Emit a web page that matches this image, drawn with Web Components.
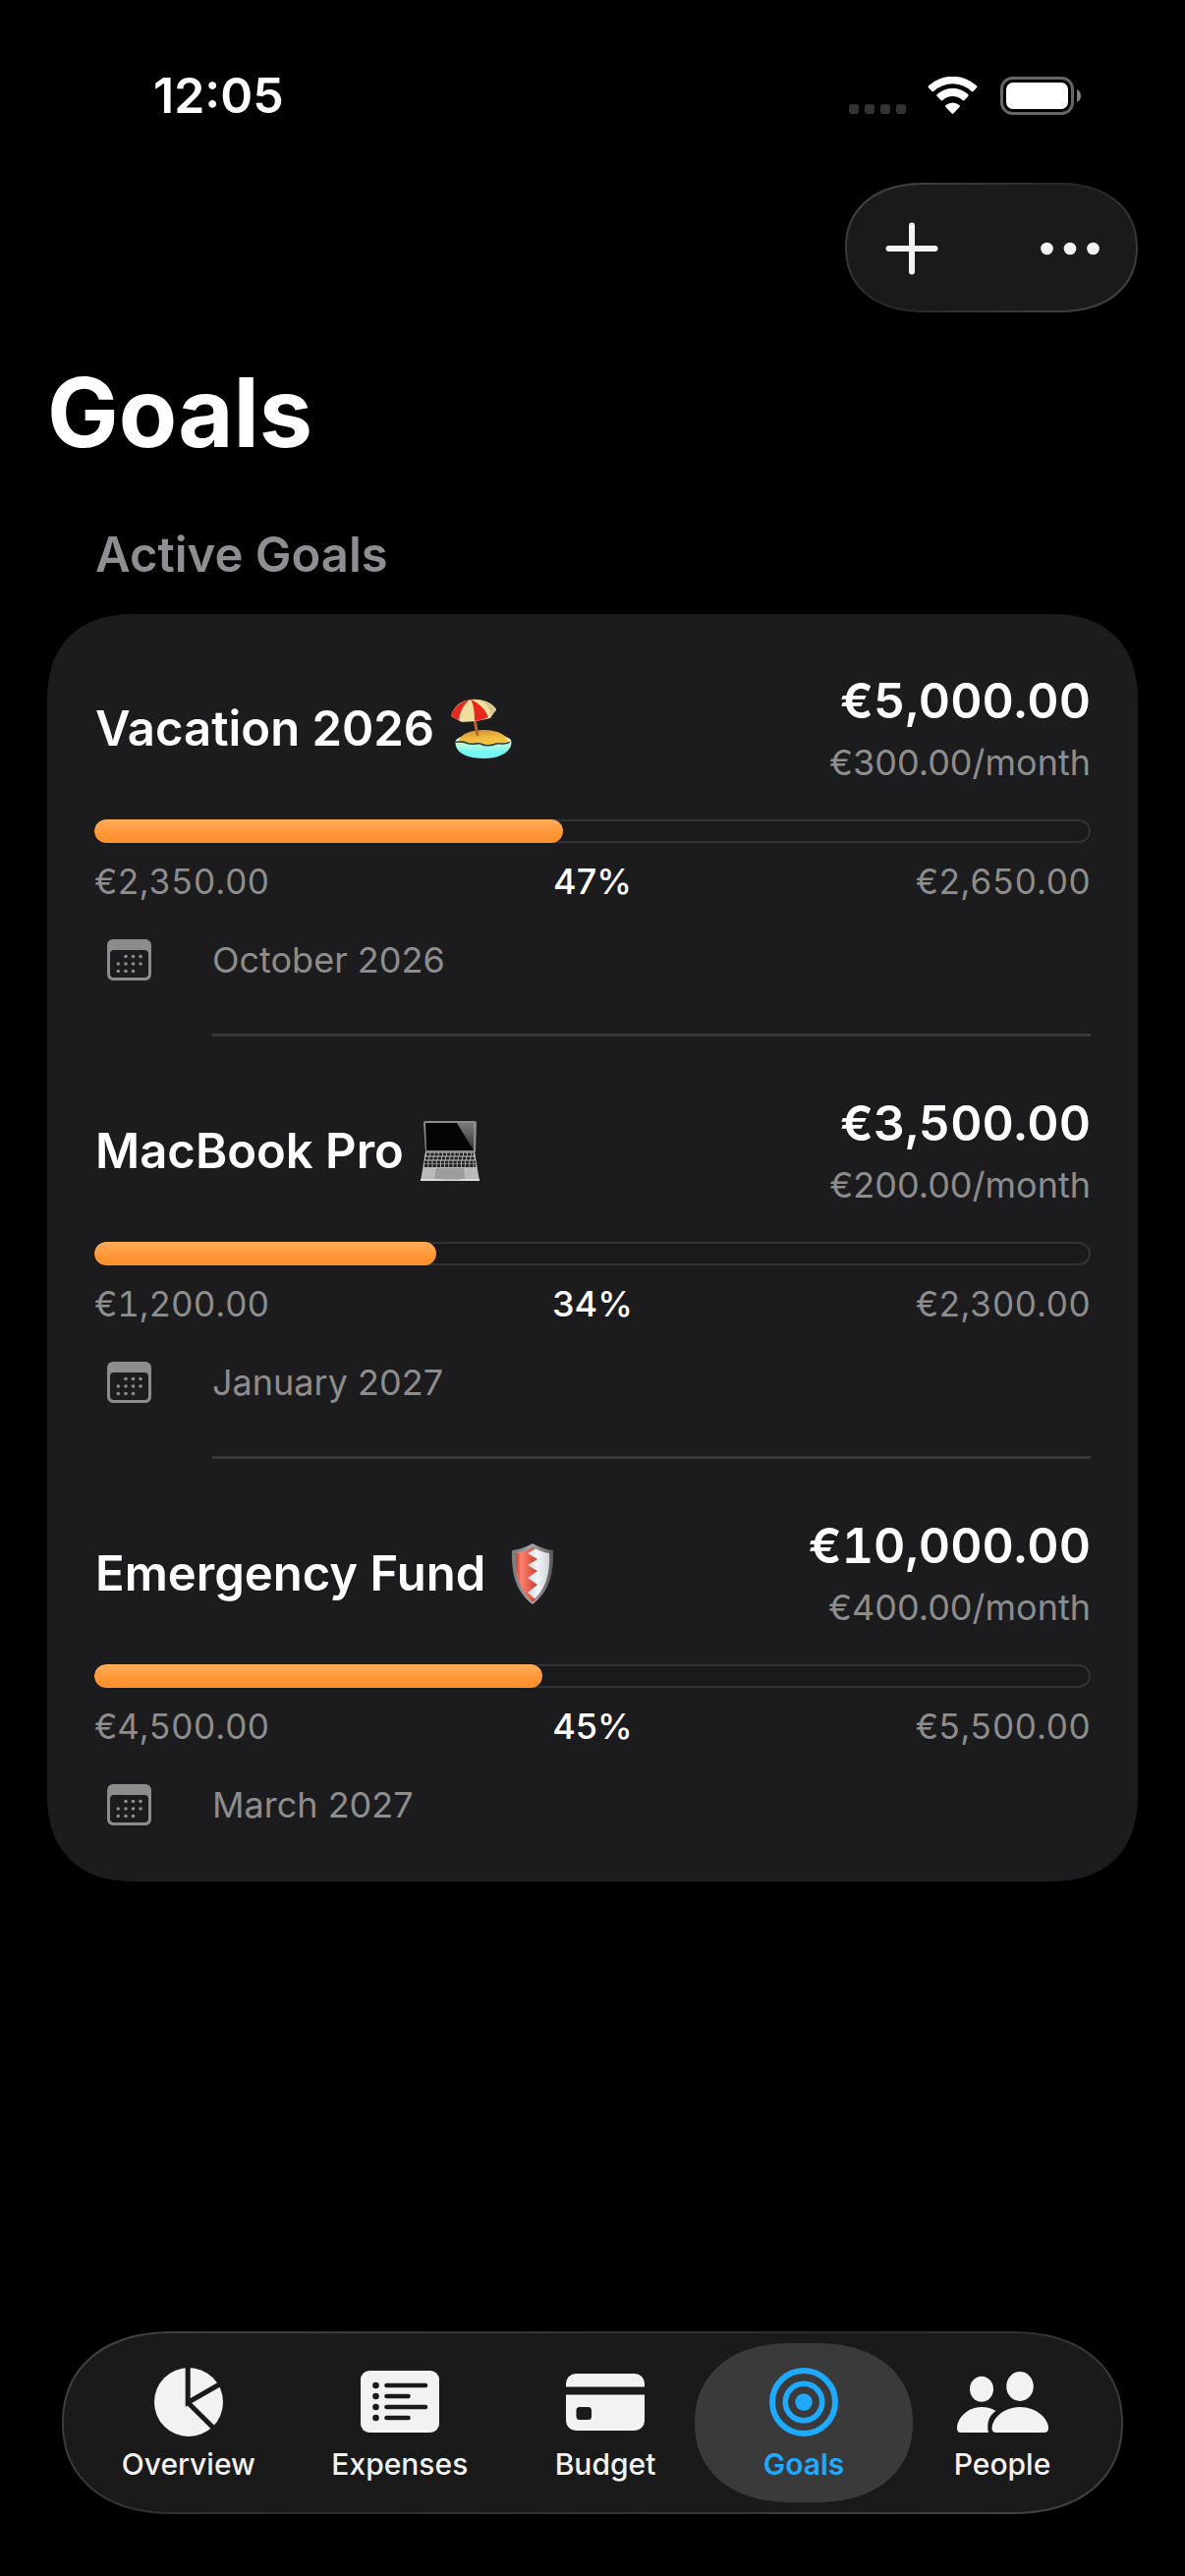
<!DOCTYPE html>
<html lang="en">
<head>
<meta charset="utf-8">
<meta name="viewport" content="width=device-width, initial-scale=1">
<title>Goals</title>
<style>
  body {
    margin: 0;
    background: #000;
    color: #fff;
    font-family: Inter, "Liberation Sans", sans-serif;
    font-size: 36px;
    line-height: 42px;
  }
</style>
</head>
<body>
<goals-app></goals-app>

<script>
/**
 * Attaches an open shadow root with the given markup.
 *
 * @param {HTMLElement} element - The host.
 * @param {string} html - Markup and styles.
 * @returns {ShadowRoot} The shadow root.
 */
function render (element, html) {
  const template = document.createElement('template')
  template.innerHTML = html
  const root = element.attachShadow({ mode: 'open' })
  root.appendChild(template.content.cloneNode(true))
  return root
}

const icons = {
  signal: [58, 38, `<g fill="#333"><rect y="28" width="10" height="10" rx="3"/><rect x="16" y="28" width="10" height="10" rx="3"/><rect x="32" y="28" width="10" height="10" rx="3"/><rect x="48" y="28" width="10" height="10" rx="3"/></g>`],
  wifi: [52, 38, `<g fill="currentColor"><path d="M1 11.200Q0 10.200 1 9.200A36.500 36.500 0 0 1 50 9.200Q51 10.200 50 11.200L46.400 14.900Q45.500 15.700 44.500 14.800A28 28 0 0 0 6.500 14.800Q5.500 15.700 4.600 14.900Z"/><path d="M9.700 20Q8.700 19 9.700 18A23.400 23.400 0 0 1 41.300 18Q42.300 19 41.300 20L37.400 24Q36.500 24.900 35.500 24A14.800 14.800 0 0 0 15.500 24Q14.500 24.900 13.600 24Z"/><path d="M18.500 29Q17.600 28 18.600 27.100A10.500 10.500 0 0 1 32.400 27.100Q33.400 28 32.500 29L26.300 35.500Q25.500 36.300 24.700 35.500Z" transform="translate(0 2)"/></g>`],
  battery: [82, 39, `<rect x="1.500" y="1.500" width="72" height="36" rx="11" fill="none" stroke="#666" stroke-width="3"/><rect x="6" y="6" width="63" height="27" rx="7" fill="currentColor"/><path d="M78 13q4 2 4 6.500t-4 6.500z" fill="#808080"/>`],
  plus: [54, 54, `<path d="M27 3.500v47M3.500 27h47" stroke="currentColor" stroke-width="6" stroke-linecap="round"/>`],
  more: [60, 14, `<g fill="currentColor"><circle cx="6.500" cy="7" r="6.300"/><circle cx="30" cy="7" r="6.300"/><circle cx="53.500" cy="7" r="6.300"/></g>`],
  calendar: [46, 42, `<path fill="currentColor" fill-rule="evenodd" d="M6 0h33a6 6 0 0 1 6 6v30a6 6 0 0 1-6 6H6a6 6 0 0 1-6-6V6a6 6 0 0 1 6-6zM7 11a4 4 0 0 0-4 4v20a4 4 0 0 0 4 4h31a4 4 0 0 0 4-4V15a4 4 0 0 0-4-4z"/><g fill="currentColor"><circle cx="19" cy="17.500" r="1.800"/><circle cx="26.500" cy="17.500" r="1.800"/><circle cx="34" cy="17.500" r="1.800"/><circle cx="11.300" cy="25" r="1.800"/><circle cx="19" cy="25" r="1.800"/><circle cx="26.500" cy="25" r="1.800"/><circle cx="34" cy="25" r="1.800"/><circle cx="11.300" cy="32.500" r="1.800"/><circle cx="19" cy="32.500" r="1.800"/><circle cx="26.500" cy="32.500" r="1.800"/></g>`],
  overview: [94, 72, `<mask id="m"><path fill="#fff" d="M0 0h94v72H0z"/><path d="M46.200-2v38.500L80 17M46.200 36.500 74 64" fill="none" stroke="#000" stroke-width="5"/></mask><circle cx="47" cy="36" r="35" fill="currentColor" mask="url(#m)"/>`],
  expenses: [94, 72, `<path fill="currentColor" d="M16 4h62a9 9 0 0 1 9 9v45a9 9 0 0 1-9 9H16a9 9 0 0 1-9-9V13a9 9 0 0 1 9-9z"/><g fill="#1a1a1a"><circle cx="22.500" cy="19" r="3.300"/><circle cx="22.500" cy="30" r="3.300"/><circle cx="22.500" cy="41" r="3.300"/><circle cx="22.500" cy="52" r="3.300"/></g><path d="M33.500 19h39.500M33.500 30h22M33.500 41h39.500M33.500 52h22" stroke="#1a1a1a" stroke-width="4.600" stroke-linecap="round"/>`],
  budget: [94, 72, `<path fill="currentColor" fill-rule="evenodd" d="M7 20.500V17A10 10 0 0 1 17 7h60a10 10 0 0 1 10 10v3.500zM7 28.500h80V55a10 10 0 0 1-10 10H17A10 10 0 0 1 7 55zM21 41a3.500 3.500 0 0 0-3.500 3.500v6A3.500 3.500 0 0 0 21 54h8.500a3.500 3.500 0 0 0 3.500-3.500v-6A3.500 3.500 0 0 0 29.500 41z"/>`],
  goals: [94, 72, `<g fill="none" stroke="currentColor"><circle cx="47" cy="36" r="32" stroke-width="6"/><circle cx="47" cy="36" r="18.700" stroke-width="5.600"/></g><circle cx="47" cy="36" r="8.700" fill="currentColor"/>`],
  people: [94, 72, `<g fill="currentColor"><ellipse cx="26" cy="22.700" rx="12" ry="13"/><ellipse cx="65" cy="20" rx="13.800" ry="15"/><path d="M5 67q-4 0-4-4.500C1 53 11 41 26 41q8.500 0 14.500 4C33 50 31 58 33 67z"/><path d="M41 67q-4.500 0-4.500-4.500C36.500 53 48 41 65 41s29 12 29 21.500Q94 67 89.500 67z"/></g>`]
}

customElements.define('app-icon',
/**
 * Draws one of the named icons.
 */
  class extends HTMLElement {
    connectedCallback () {
      const [width, height, shape] = icons[this.getAttribute('name')]
      render(this, `
        <style>
          :host { display: block; flex: none; }
          svg { display: block; }
        </style>
        <svg width="${width}" height="${height}" viewBox="0 0 ${width} ${height}" aria-hidden="true">${shape}</svg>
      `)
    }
  })

const pictures = {
  beach: ['Beach with umbrella', `
    <defs>
      <linearGradient id="sea" x2="0" y2="1"><stop offset=".3" stop-color="#e9f3cf"/><stop offset=".75" stop-color="#6cf8f4"/><stop offset="1" stop-color="#8ee"/></linearGradient>
      <linearGradient id="sand" x2=".3" y2="1"><stop stop-color="#c98a36"/><stop offset=".6" stop-color="#f2b93e"/><stop offset="1" stop-color="#f8c93f"/></linearGradient>
    </defs>
    <path d="M5 42C2 54 15 61 33 61s31-8 28-19c-8-9-46-9-56 0z" fill="url(#sea)"/>
    <path d="M8 45C8 36 20 32 34 32s25 6 24 13c-4 3-8-1-13 1-6 3-11 1-15 0-7-2-9 2-14-1-3-2-6 0-8 0z" fill="url(#sand)"/>
    <path d="M5 44c4 1 7-1 10 1 6 3 9 0 15 1 6 3 11 2 16 0 5-1 9 2 14-2" fill="none" stroke="#24403f" stroke-width="1.600"/>
    <path d="M23 17l4 20" stroke="#b96430" stroke-width="2.800" stroke-linecap="round"/>
    <path d="M0 18C2 9 9 2 21 1c12-1 22 5 25 10l-6 9-14 3-15 1z" fill="#eedf9f"/>
    <path d="M0 18C2 10 9 3 19 1 12 7 9 14 8 22zM20 1c3 5 4 12 4 22q8-1 14-4C35 11 28 4 20 1z" fill="#e8281d"/>
    <path d="M21 1c10 0 18 4 19 16l6-5C42 5 32 0 21 1z" fill="#e3cf8f"/>
    <path d="M30 2c7 3 11 9 11 15l5-6C43 6 37 2 30 2z" fill="#d9c68a"/>`],
  laptop: ['Laptop', `
    <defs><linearGradient id="lid" x2="0" y2="1"><stop stop-color="#7a7a7a"/><stop offset="1" stop-color="#333"/></linearGradient></defs>
    <path d="M5 0h50q2 0 2 2l-1 30H5L3 2q0-2 2-2z" fill="#8c8c8c"/>
    <path d="M5 2h49v28H6z" fill="#050505"/>
    <path d="M37 2h17v28z" fill="url(#lid)"/>
    <path d="M5 32h50l5 29H0z" fill="#b9b9b9"/>
    <path d="M5 32h50l2 14H3z" fill="#c6c6c6"/>
    <path d="M6 34h48M5 38h50M4 42h52M4 45.500h52" stroke="#222" stroke-width="2.800" stroke-dasharray="3.400 .8"/>
    <path d="M16 48h28l1 11H14z" fill="#9d9d9d"/>
    <path d="M0 59h20q1 1 3 1h15q2 0 3-1h19v2H41q-1-1-2 0H21q-1 0-2 0H0z" fill="#ddd"/>`],
  shield: ['Shield', `
    <defs>
      <linearGradient id="rim"><stop stop-color="#777"/><stop offset=".5" stop-color="#a5a5a5"/><stop offset="1" stop-color="#555"/></linearGradient>
      <linearGradient id="red"><stop stop-color="#c33f30"/><stop offset=".25" stop-color="#ff806f"/><stop offset="1" stop-color="#c83d2c"/></linearGradient>
      <linearGradient id="white"><stop stop-color="#aeb4ba"/><stop offset=".65" stop-color="#f2f5f8"/><stop offset="1" stop-color="#cfd3d8"/></linearGradient>
    </defs>
    <path d="M10 7Q20 6 31 0q11 6 21 7C53 32 47 50 31 62 15 50 9 32 10 7z" fill="url(#rim)"/>
    <path d="M14 10Q23 9 31 4q9 5 17 6c1 22-4 37-17 48C18 47 13 32 14 10z" fill="url(#white)"/>
    <path d="M14 10Q23 9 31 4l3 1-8 5 10 6-10 6 10 6-10 7 10 7-10 8 8 7-3 3C18 47 13 32 14 10z" fill="url(#red)"/>`]
}

customElements.define('goal-picture',
/**
 * Small illustration that follows a goal's name.
 */
  class extends HTMLElement {
    connectedCallback () {
      const [label, shape] = pictures[this.getAttribute('name')]
      render(this, `
        <style>
          :host { display: block; flex: none; }
          svg { display: block; }
        </style>
        <svg width="62" height="62" viewBox="0 0 62 62" role="img" aria-label="${label}">${shape}</svg>
      `)
    }
  })

customElements.define('status-bar',
/**
 * Clock and system indicators.
 */
  class extends HTMLElement {
    connectedCallback () {
      render(this, `
        <style>
          :host {
            display: flex;
            align-items: center;
            justify-content: space-between;
            padding: 67px 106px 59px 156px;
            font-size: 50px;
            font-weight: 600;
            line-height: 60px;
          }
          div { display: flex; align-items: center; gap: 22px; }
        </style>
        <time>12:05</time>
        <div>
          <app-icon name="signal"></app-icon>
          <app-icon name="wifi"></app-icon>
          <app-icon name="battery"></app-icon>
        </div>
      `)
    }
  })

customElements.define('tool-bar',
/**
 * Glass capsule with the page actions.
 */
  class extends HTMLElement {
    connectedCallback () {
      render(this, `
        <style>
          :host { display: flex; justify-content: flex-end; padding: 0 48px; }
          div {
            box-sizing: border-box;
            display: flex;
            justify-content: space-between;
            width: 298px;
            height: 132px;
            padding: 2px 11px 0 10px;
            border: 2px solid transparent;
            border-radius: 80px / 66px;
            corner-shape: superellipse(1.15);
            background:
              linear-gradient(#1a1a1a, #1a1a1a) padding-box,
              linear-gradient(150deg, #484848, #303030 35%, #262626 50%, #303030 65%, #484848) border-box;
          }
          button {
            display: grid;
            place-items: center;
            width: 112px;
            padding: 0;
            border: 0;
            background: none;
            color: #f2f2f2;
          }
        </style>
        <div>
          <button type="button" aria-label="Add goal"><app-icon name="plus"></app-icon></button>
          <button type="button" aria-label="More"><app-icon name="more"></app-icon></button>
        </div>
      `)
    }
  })

customElements.define('goal-item',
/**
 * One goal: name, amounts, progress and target date.
 */
  class extends HTMLElement {
    connectedCallback () {
      const get = (name) => this.getAttribute(name)
      const amount = (name) => Number(get(name).replace(/[€,]/g, ''))
      const percent = Math.round(amount('saved') / amount('target') * 100)
      render(this, `
        <style>
          :host { display: block; padding: 58px 48px 0; color: #8d8d8d; }
          header, h3, .amounts, .date { display: flex; }
          header { align-items: center; justify-content: space-between; }
          h3 {
            align-items: center;
            gap: 17px;
            margin: 0;
            padding: 3px 0 0 1px;
            color: #fff;
            font-size: 49px;
            font-weight: 600;
            line-height: 60px;
          }
          .amounts { flex-direction: column; align-items: flex-end; gap: 12px; }
          strong {
            color: #fff;
            font-size: 50px;
            font-weight: 600;
            line-height: 60px;
            font-variant-numeric: tabular-nums;
          }
          progress {
            display: block;
            appearance: none;
            width: 100%;
            height: 24px;
            margin: 37px 0 18px;
            border: 0;
            border-radius: 12px;
            overflow: hidden;
            background: #1a1a1c;
            box-shadow: inset 0 0 0 2px #333335;
          }
          progress::-webkit-progress-bar { background: none; }
          progress::-webkit-progress-value {
            border-radius: 12px;
            background: linear-gradient(#ffac57, #ff9230 75%);
          }
          .values { display: grid; grid-template-columns: 1fr auto 1fr; }
          .values span { font-size: 35px; font-variant-numeric: tabular-nums; }
          .values span:last-child { text-align: right; }
          b { color: #fff; font-weight: 500; }
          .date { align-items: center; gap: 61px; padding: 38px 0 0 13px; }
          hr { height: 3px; margin: 54px 0 0 120px; border: 0; background: #38383a; }
          :host(:last-child) hr { background: none; }
        </style>
        <header>
          <h3><slot></slot></h3>
          <div class="amounts"><strong>${get('target')}</strong><span>${get('monthly')}/month</span></div>
        </header>
        <progress max="${amount('target')}" value="${amount('saved')}" aria-label="Saved"></progress>
        <div class="values"><span>${get('saved')}</span><b>${percent}%</b><span>${get('remaining')}</span></div>
        <div class="date"><app-icon name="calendar"></app-icon><time>${get('date')}</time></div>
        <hr>
      `)
    }
  })

customElements.define('goal-section',
/**
 * Titled group of goals.
 */
  class extends HTMLElement {
    connectedCallback () {
      render(this, `
        <style>
          :host { display: block; padding: 0 48px; }
          h2 {
            margin: 0;
            padding: 54px 49px 30px;
            color: #8e8e93;
            font-size: 49px;
            font-weight: 600;
            line-height: 60px;
          }
          section {
            border-radius: 90px;
            corner-shape: superellipse(1.25);
            background: #1c1c1e;
          }
        </style>
        <h2>${this.getAttribute('heading')}</h2>
        <section><slot></slot></section>
      `)
    }
  })

customElements.define('tab-item',
/**
 * A link in the tab bar.
 */
  class extends HTMLElement {
    connectedCallback () {
      const icon = this.getAttribute('icon')
      render(this, `
        <style>
          :host { display: flex; flex: 1 1 auto; min-width: 222px; }
          :host(:not(:last-child)) { margin-right: -20px; }
          a {
            flex: 1;
            display: flex;
            flex-direction: column;
            align-items: center;
            gap: 9px;
            padding: 24px 47px 0;
            border-radius: 98px / 81px;
            corner-shape: superellipse(1.15);
            color: #f2f2f2;
            font-size: 30px;
            font-weight: 500;
            line-height: 36px;
            text-decoration: none;
          }
          a[aria-current] { background: #3a3a3a; color: #1eaaff; font-weight: 600; }
        </style>
        <a href="#${icon}"${this.hasAttribute('selected') ? ' aria-current="page"' : ''}>
          <app-icon name="${icon}"></app-icon>
          <slot></slot>
        </a>
      `)
    }
  })

customElements.define('tab-bar',
/**
 * Glass bar that holds the tabs.
 */
  class extends HTMLElement {
    connectedCallback () {
      render(this, `
        <style>
          :host { display: block; padding: 0 63px 63px; }
          nav {
            box-sizing: border-box;
            display: flex;
            height: 186px;
            padding: 10px;
            border: 2px solid transparent;
            border-radius: 112px / 93px;
            corner-shape: superellipse(1.15);
            background:
              linear-gradient(#1a1a1a, #1a1a1a) padding-box,
              linear-gradient(160deg, #444, #333 35%, #2c2c2c 50%, #333 65%, #444) border-box;
          }
        </style>
        <nav><slot></slot></nav>
      `)
    }
  })

customElements.define('goals-app',
/**
 * The whole screen.
 */
  class extends HTMLElement {
    connectedCallback () {
      render(this, `
        <style>
          :host { display: flex; flex-direction: column; min-height: 100vh; }
          main { flex: 1; }
          h1 {
            margin: 0;
            padding: 41px 48px 0;
            font-size: 97px;
            font-weight: 700;
            line-height: 122px;
          }
        </style>
        <status-bar></status-bar>
        <tool-bar></tool-bar>
        <main>
          <h1>Goals</h1>
          <goal-section heading="Active Goals">
            <goal-item target="€5,000.00" monthly="€300.00" saved="€2,350.00" remaining="€2,650.00" date="October 2026">Vacation 2026 <goal-picture name="beach"></goal-picture></goal-item>
            <goal-item target="€3,500.00" monthly="€200.00" saved="€1,200.00" remaining="€2,300.00" date="January 2027">MacBook Pro <goal-picture name="laptop"></goal-picture></goal-item>
            <goal-item target="€10,000.00" monthly="€400.00" saved="€4,500.00" remaining="€5,500.00" date="March 2027">Emergency Fund <goal-picture name="shield"></goal-picture></goal-item>
          </goal-section>
        </main>
        <tab-bar>
          <tab-item icon="overview">Overview</tab-item>
          <tab-item icon="expenses">Expenses</tab-item>
          <tab-item icon="budget">Budget</tab-item>
          <tab-item icon="goals" selected>Goals</tab-item>
          <tab-item icon="people">People</tab-item>
        </tab-bar>
      `)
    }
  })
</script>
</body>
</html>
